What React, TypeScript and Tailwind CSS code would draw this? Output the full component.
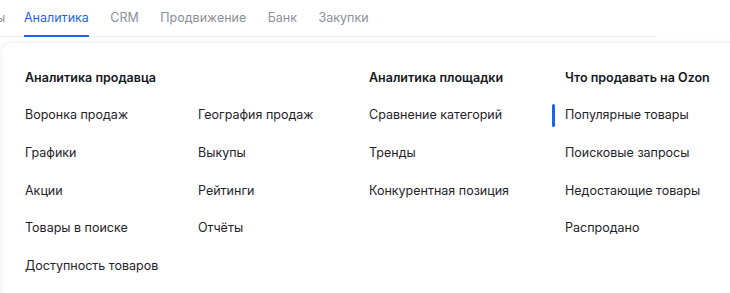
const sellerLeft = ["Воронка продаж", "Графики", "Акции", "Товары в поиске", "Доступность товаров"];
const sellerRight = ["География продаж", "Выкупы", "Рейтинги", "Отчёты"];
const market = ["Сравнение категорий", "Тренды", "Конкурентная позиция"];
const whatToSell = ["Популярные товары", "Поисковые запросы", "Недостающие товары", "Распродано"];

function Item({ label, active }: { label: string; active?: boolean }) {
	return (
		<div className="relative h-[37.6px] flex items-center text-[12.5px] text-[#1f2329]">
			{active && (
				<span className="absolute left-[-13px] top-[7px] h-[23px] w-[3px] rounded-full bg-[#1d63ed]" />
			)}
			{label}
		</div>
	);
}

function Column({ title, items, className }: { title?: string; items: string[]; className?: string }) {
	return (
		<div className={className}>
			<div className="h-[37px] flex items-center text-[12.5px] font-semibold text-[#15181d]">
				{title ?? "\u00a0"}
			</div>
			{items.map((label, i) => (
				<Item key={label} label={label} active={title === "Что продавать на Ozon" && i === 0} />
			))}
		</div>
	);
}

export default function App() {
	const tabs = ["Аналитика", "CRM", "Продвижение", "Банк", "Закупки"];
	return (
		<div className="w-[730px] h-[293px] overflow-hidden bg-white font-['Inter',sans-serif]">
			<nav className="h-[37px] w-[657px] flex items-stretch border-b border-[#e9ebee] text-[12.5px]">
				<span className="w-[24px] flex items-center text-[#8b9099] -ml-[4px]">ы</span>
				<div className="flex gap-[21.5px] ml-[4px]">
					{tabs.map((t, i) => (
						<div
							key={t}
							className={
								i === 0
									? "flex items-center pt-[1px] border-b-2 border-[#1d63ed] -mb-px text-[#1d63ed]"
									: "flex items-center pt-[1px] text-[#8b9099]"
							}
						>
							{t}
						</div>
					))}
				</div>
			</nav>
			<div className="mt-[5px] ml-[1px] w-[760px] h-[260px] rounded-tl-[10px] border-t border-l border-[#f1f2f4] shadow-[0_0_6px_rgba(0,0,0,0.04)] flex pl-[23px] pt-[17px]">
				<Column title="Аналитика продавца" items={sellerLeft} className="w-[173px] shrink-0" />
				<Column items={sellerRight} className="w-[171px] shrink-0" />
				<Column title="Аналитика площадки" items={market} className="w-[196px] shrink-0" />
				<Column title="Что продавать на Ozon" items={whatToSell} className="w-[170px] shrink-0" />
			</div>
		</div>
	);
}
